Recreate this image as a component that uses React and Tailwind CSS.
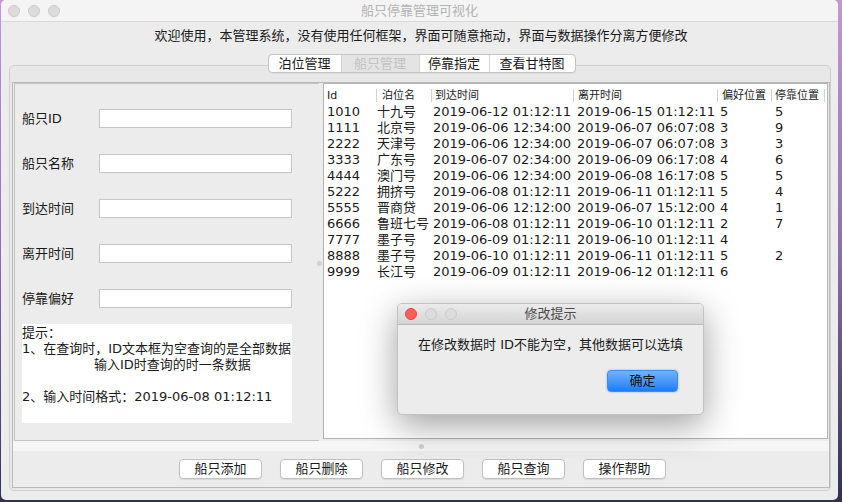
import React from 'react';

const rows = [
  ['1010', '十九号', '2019-06-12 01:12:11', '2019-06-15 01:12:11', '5', '5'],
  ['1111', '北京号', '2019-06-06 12:34:00', '2019-06-07 06:07:08', '3', '9'],
  ['2222', '天津号', '2019-06-06 12:34:00', '2019-06-07 06:07:08', '3', '3'],
  ['3333', '广东号', '2019-06-07 02:34:00', '2019-06-09 06:17:08', '4', '6'],
  ['4444', '澳门号', '2019-06-06 12:34:00', '2019-06-08 16:17:08', '5', '5'],
  ['5222', '拥挤号', '2019-06-08 01:12:11', '2019-06-11 01:12:11', '5', '4'],
  ['5555', '晋商贷', '2019-06-06 12:12:00', '2019-06-07 15:12:00', '4', '1'],
  ['6666', '鲁班七号', '2019-06-08 01:12:11', '2019-06-10 01:12:11', '2', '7'],
  ['7777', '墨子号', '2019-06-09 01:12:11', '2019-06-10 01:12:11', '4', ''],
  ['8888', '墨子号', '2019-06-10 01:12:11', '2019-06-11 01:12:11', '5', '2'],
  ['9999', '长江号', '2019-06-09 01:12:11', '2019-06-12 01:12:11', '6', ''],
];

const headers = [
  { label: 'Id', cls: 'w-[53px] pl-[3px]' },
  { label: '泊位名', cls: 'w-[55px] pl-[5px]' },
  { label: '到达时间', cls: 'w-[142px] pl-[3px]' },
  { label: '离开时间', cls: 'w-[144px] pl-[4px]' },
  { label: '偏好位置', cls: 'w-[54px] pl-[4px]' },
  { label: '停靠位置', cls: 'w-[53px] pl-[3px]' },
];

const cellWidths = ['w-[50px]', 'w-[56px]', 'w-[144px]', 'w-[143px]', 'w-[55px]', 'w-[50px]'];

const fields = ['船只ID', '船只名称', '到达时间', '离开时间', '停靠偏好'];
const buttons = ['船只添加', '船只删除', '船只修改', '船只查询', '操作帮助'];

const Light = ({ color = 'bg-[#dcdcdc] border-[#c9c9c9]' }) => (
  <span className={`block w-[12px] h-[12px] rounded-full border ${color}`} />
);

const App = () => {
  return (
    <div className="relative w-[842px] h-[502px] overflow-hidden bg-gradient-to-b from-[#c795d5] via-[#8e6fae] to-[#2f3157] font-['DejaVu_Sans','Noto_Sans_CJK_SC',sans-serif] text-[13px] text-[#1a1a1a]">
      <div className="ml-[1px] w-[837px] h-[500px] rounded-[5px] bg-[#ececec] flex flex-col overflow-hidden">
        {/* title bar */}
        <div className="h-[22px] shrink-0 grid grid-cols-[1fr_auto_1fr] items-center bg-[#f4f4f4] border-b border-[#d9d9d9]">
          <div className="flex gap-[8px] pl-[7px]">
            <Light />
            <Light />
            <Light />
          </div>
          <div className="text-[#b3b3b3] leading-[16px]">船只停靠管理可视化</div>
          <div />
        </div>

        {/* welcome */}
        <div className="h-[28px] shrink-0 flex items-center justify-center pl-[3px] leading-[16px]">
          欢迎使用，本管理系统，没有使用任何框架，界面可随意拖动，界面与数据操作分离方便修改
        </div>

        {/* tabs */}
        <div className="relative z-10 mt-[4px] h-[19px] flex justify-center pl-[4px]">
          <div className="flex h-[19px] rounded-[4px] border border-[#c4c4c4] bg-white overflow-hidden leading-[17px] shadow-[0_1px_0_rgba(0,0,0,0.04)]">
            <div className="w-[72px] text-center">泊位管理</div>
            <div className="w-[78px] text-center bg-[#e4e4e4] text-[#c2c2c2] border-l border-[#d6d6d6]">船只管理</div>
            <div className="w-[70px] text-center border-l border-[#d6d6d6]">停靠指定</div>
            <div className="w-[86px] text-center border-l border-[#d6d6d6]">查看甘特图</div>
          </div>
        </div>

        {/* tab pane */}
        <div className="-mt-[8px] ml-[8px] w-[822px] h-[426px] rounded-[5px] border border-[#d0d0d0] bg-[#e8e8e8] pt-[16px] pl-[2px]">
          <div className="w-[818px] h-[406px] border border-[#b9b9b9] bg-[#ececec] flex flex-col">
            {/* split */}
            <div className="h-[358px] flex pl-[1px]">
              {/* left form */}
              <div className="w-[305px] h-[358px] border-l border-t border-b border-[#c4c4c4] pt-[25px] pl-[7px]">
                <div className="flex flex-col gap-[26px]">
                  {fields.map((f) => (
                    <div key={f} className="flex items-center h-[19px]">
                      <div className="w-[77px] leading-[16px]">{f}</div>
                      <div className="w-[193px] h-[19px] bg-white border border-[#c6c6c6]" />
                    </div>
                  ))}
                </div>
                <div className="mt-[16px] w-[270px] h-[99px] bg-white pt-[1px] leading-[16px]">
                  <div>提示：</div>
                  <div>1、在查询时，ID文本框为空查询的是全部数据</div>
                  <div className="pl-[72px]">输入ID时查询的时一条数据</div>
                  <div>&nbsp;</div>
                  <div>2、输入时间格式：2019-06-08 01:12:11</div>
                </div>
              </div>

              {/* divider */}
              <div className="w-[4px] flex items-center justify-center">
                <span className="block w-[5px] h-[5px] shrink-0 rounded-full bg-[#cfcfcf] -ml-[3px] mt-[2px]" />
              </div>

              {/* table */}
              <div className="w-[505px] h-[356px] bg-white border border-[#b3b3b3] pt-[2px]">
                <div className="flex h-[18px] items-center">
                  {headers.map((h) => (
                    <div
                      key={h.label}
                      className={`${h.cls} h-[13px] border-r border-[#d2d2d2] text-[11px] leading-[13px] text-[#222]`}
                    >
                      {h.label}
                    </div>
                  ))}
                </div>
                {rows.map((r) => (
                  <div key={r[0]} className="flex h-[16px] leading-[16px] pl-[3px] whitespace-nowrap">
                    {r.map((c, i) => (
                      <div key={i} className={`${cellWidths[i]} shrink-0`}>
                        {c}
                      </div>
                    ))}
                  </div>
                ))}
              </div>
            </div>

            {/* horizontal divider */}
            <div className="h-[10px] bg-[#f6f6f6] flex items-center justify-center">
              <span className="block w-[5px] h-[5px] rounded-full bg-[#cfcfcf] mt-[1px]" />
            </div>

            {/* buttons */}
            <div className="flex justify-center gap-[18px] pt-[8px] pl-[3px]">
              {buttons.map((b) => (
                <div
                  key={b}
                  className="w-[83px] h-[20px] rounded-[4px] bg-white border border-[#c0c0c0] shadow-[0_1px_1px_rgba(0,0,0,0.08)] flex items-center justify-center leading-[16px]"
                >
                  {b}
                </div>
              ))}
            </div>
          </div>
        </div>
      </div>

      {/* modal dialog */}
      <div className="absolute left-[397px] top-[303px] w-[307px] h-[112px] rounded-[5px] overflow-hidden bg-[#ececec] border border-[#c2c2c2] shadow-[0_10px_35px_rgba(0,0,0,0.38)] flex flex-col">
        <div className="h-[21px] shrink-0 grid grid-cols-[1fr_auto_1fr] items-center bg-gradient-to-b from-[#ebebeb] to-[#d4d4d4] border-b border-[#b8b8b8]">
          <div className="flex gap-[8px] pl-[7px]">
            <Light color="bg-[#fc5f57] border-[#df4744]" />
            <Light />
            <Light />
          </div>
          <div className="text-[#4c4c4c] leading-[16px]">修改提示</div>
          <div />
        </div>
        <div className="pt-[12px] text-center leading-[16px]">在修改数据时 ID不能为空，其他数据可以选填</div>
        <div className="flex justify-end pr-[25px] mt-[17px]">
          <div className="w-[71px] h-[22px] rounded-[4px] bg-gradient-to-b from-[#6fb4fc] to-[#1b7bf8] border border-[#3f8cf0] shadow-[0_0_2px_rgba(40,120,240,0.6)] flex items-center justify-center leading-[16px] text-[#111]">
            确定
          </div>
        </div>
      </div>
    </div>
  );
};

export default App;
